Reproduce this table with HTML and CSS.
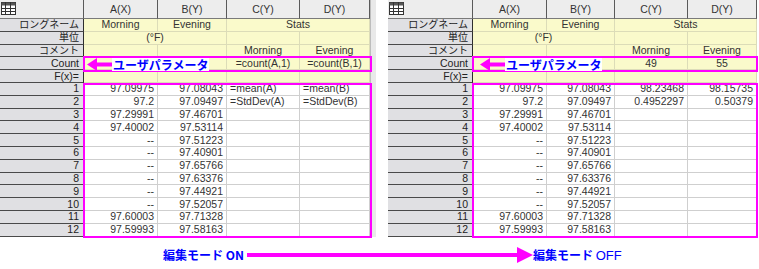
FILE: index.html
```html
<!DOCTYPE html>
<html lang="ja">
<head>
<meta charset="utf-8">
<link rel="stylesheet" href="styles.css">
</head>
<body>
<div class="page">
  <div class="panels">
    <div class="panel panel-left">
      <div class="sheet cols-left">
        <div class="c hd corner"><svg width="15" height="13" viewBox="0 0 15 13"><rect x="0.5" y="0.5" width="14" height="12" fill="#fff" stroke="#333"/><rect x="0.5" y="0.5" width="14" height="3" fill="#555"/><path d="M0 6.5H15M0 9.5H15M4.5 0V13M9.5 0V13" stroke="#333" stroke-width="1"/></svg></div>
        <div class="c hd">A(X)</div><div class="c hd">B(Y)</div><div class="c hd">C(Y)</div><div class="c hd">D(Y)</div>

        <div class="c lb jp">ロングネーム</div><div class="c y ctr">Morning</div><div class="c y ctr">Evening</div><div class="c y ctr span2">Stats</div>
        <div class="c lb jp">単位</div><div class="c y ctr span2">(°F)</div><div class="c y"></div><div class="c y"></div>
        <div class="c lb jp">コメント</div><div class="c y"></div><div class="c y"></div><div class="c y ctr">Morning</div><div class="c y ctr">Evening</div>
        <div class="c lb">Count</div><div class="c y"></div><div class="c y"></div><div class="c y ctr">=count(A,1)</div><div class="c y ctr">=count(B,1)</div>
        <div class="c lb">F(x)=</div><div class="c y"></div><div class="c y"></div><div class="c y"></div><div class="c y"></div>

        <div class="c lb">1</div><div class="c d">97.09975</div><div class="c d">97.08043</div><div class="c d lft">=mean(A)</div><div class="c d lft">=mean(B)</div>
        <div class="c lb">2</div><div class="c d">97.2</div><div class="c d">97.09497</div><div class="c d lft">=StdDev(A)</div><div class="c d lft">=StdDev(B)</div>
        <div class="c lb">3</div><div class="c d">97.29991</div><div class="c d">97.46701</div><div class="c d"></div><div class="c d"></div>
        <div class="c lb">4</div><div class="c d">97.40002</div><div class="c d">97.53114</div><div class="c d"></div><div class="c d"></div>
        <div class="c lb">5</div><div class="c d">--</div><div class="c d">97.51223</div><div class="c d"></div><div class="c d"></div>
        <div class="c lb">6</div><div class="c d">--</div><div class="c d">97.40901</div><div class="c d"></div><div class="c d"></div>
        <div class="c lb">7</div><div class="c d">--</div><div class="c d">97.65766</div><div class="c d"></div><div class="c d"></div>
        <div class="c lb">8</div><div class="c d">--</div><div class="c d">97.63376</div><div class="c d"></div><div class="c d"></div>
        <div class="c lb">9</div><div class="c d">--</div><div class="c d">97.44921</div><div class="c d"></div><div class="c d"></div>
        <div class="c lb">10</div><div class="c d">--</div><div class="c d">97.52057</div><div class="c d"></div><div class="c d"></div>
        <div class="c lb">11</div><div class="c d">97.60003</div><div class="c d">97.71328</div><div class="c d"></div><div class="c d"></div>
        <div class="c lb">12</div><div class="c d">97.59993</div><div class="c d">97.58163</div><div class="c d"></div><div class="c d"></div>
      </div>
      <div class="strip"></div>
      <div class="box box-count box-count-left"></div>
      <div class="box box-data box-data-left"></div>
      <div class="note note-left">
        <svg class="note-arrow" width="25" height="13" viewBox="0 0 25 13"><path d="M0 6.5L10 0V4.5H25V8.5H10V13Z" fill="#ff00ff"/></svg>
        <span class="note-text">ユーザパラメータ</span>
      </div>
    </div>

    <div class="panel panel-right">
      <div class="sheet cols-right">
        <div class="c hd corner"><svg width="15" height="13" viewBox="0 0 15 13"><rect x="0.5" y="0.5" width="14" height="12" fill="#fff" stroke="#333"/><rect x="0.5" y="0.5" width="14" height="3" fill="#555"/><path d="M0 6.5H15M0 9.5H15M4.5 0V13M9.5 0V13" stroke="#333" stroke-width="1"/></svg></div>
        <div class="c hd">A(X)</div><div class="c hd">B(Y)</div><div class="c hd">C(Y)</div><div class="c hd">D(Y)</div>

        <div class="c lb jp">ロングネーム</div><div class="c y ctr">Morning</div><div class="c y ctr">Evening</div><div class="c y ctr span2">Stats</div>
        <div class="c lb jp">単位</div><div class="c y ctr span2">(°F)</div><div class="c y"></div><div class="c y"></div>
        <div class="c lb jp">コメント</div><div class="c y"></div><div class="c y"></div><div class="c y ctr">Morning</div><div class="c y ctr">Evening</div>
        <div class="c lb">Count</div><div class="c y"></div><div class="c y"></div><div class="c y ctr">49</div><div class="c y ctr">55</div>
        <div class="c lb">F(x)=</div><div class="c y"></div><div class="c y"></div><div class="c y"></div><div class="c y"></div>

        <div class="c lb">1</div><div class="c d">97.09975</div><div class="c d">97.08043</div><div class="c d">98.23468</div><div class="c d">98.15735</div>
        <div class="c lb">2</div><div class="c d">97.2</div><div class="c d">97.09497</div><div class="c d">0.4952297</div><div class="c d">0.50379</div>
        <div class="c lb">3</div><div class="c d">97.29991</div><div class="c d">97.46701</div><div class="c d"></div><div class="c d"></div>
        <div class="c lb">4</div><div class="c d">97.40002</div><div class="c d">97.53114</div><div class="c d"></div><div class="c d"></div>
        <div class="c lb">5</div><div class="c d">--</div><div class="c d">97.51223</div><div class="c d"></div><div class="c d"></div>
        <div class="c lb">6</div><div class="c d">--</div><div class="c d">97.40901</div><div class="c d"></div><div class="c d"></div>
        <div class="c lb">7</div><div class="c d">--</div><div class="c d">97.65766</div><div class="c d"></div><div class="c d"></div>
        <div class="c lb">8</div><div class="c d">--</div><div class="c d">97.63376</div><div class="c d"></div><div class="c d"></div>
        <div class="c lb">9</div><div class="c d">--</div><div class="c d">97.44921</div><div class="c d"></div><div class="c d"></div>
        <div class="c lb">10</div><div class="c d">--</div><div class="c d">97.52057</div><div class="c d"></div><div class="c d"></div>
        <div class="c lb">11</div><div class="c d">97.60003</div><div class="c d">97.71328</div><div class="c d"></div><div class="c d"></div>
        <div class="c lb">12</div><div class="c d">97.59993</div><div class="c d">97.58163</div><div class="c d"></div><div class="c d"></div>
      </div>
      <div class="box box-count box-count-right"></div>
      <div class="box box-data box-data-right"></div>
      <div class="note note-right">
        <svg class="note-arrow" width="25" height="13" viewBox="0 0 25 13"><path d="M0 6.5L10 0V4.5H25V8.5H10V13Z" fill="#ff00ff"/></svg>
        <span class="note-text">ユーザパラメータ</span>
      </div>
    </div>
  </div>

  <div class="caption">
    <span class="mode mode-on">編集モード ON</span>
    <svg class="big-arrow" width="286" height="16" viewBox="0 0 286 16"><rect x="0" y="6" width="272" height="4" fill="#ff00ff"/><path d="M270 0L286 8L270 16Z" fill="#ff00ff"/></svg>
    <span class="mode mode-off">編集モード <span class="off">OFF</span></span>
  </div>
</div>
</body>
</html>
```

FILE: styles.css
```css
* { box-sizing: border-box; }
html, body { margin: 0; padding: 0; background: #fff; }
body {
  font-family: "Liberation Sans", Arial, "Noto Sans CJK JP", sans-serif;
  font-size: 10.5px;
  color: #333;
  width: 759px;
  height: 269px;
  overflow: hidden;
}
.page { display: flex; flex-direction: column; }
.panels { display: flex; gap: 11px; height: 237px; }
.panel { position: relative; display: flex; }
.panel-right { margin-left: 1px; }

.sheet {
  display: grid;
  grid-template-rows: 19px repeat(17, 12.8px);
}
.cols-left { grid-template-columns: 84px 74px 69px 73px 70px; }
.cols-right { grid-template-columns: 85px 74px 68px 73px 69px; }
.strip { width: 6px; background: #e9e9e9; border-left: 1px solid #bdbdbd; }

.c {
  display: flex;
  align-items: center;
  justify-content: flex-end;
  padding: 0 3px;
  white-space: nowrap;
  overflow: hidden;
  line-height: 11px;
  border-right: 1px solid #cfcfcf;
  border-bottom: 1px solid #cfcfcf;
}
.hd {
  background: #ededed;
  justify-content: center;
  border-right: 1px solid #5a5a5a;
  border-bottom: 1px solid #7a7a7a;
  color: #333;
  padding-top: 1px;
}
.corner { justify-content: flex-start; padding-left: 1px; align-items: flex-start; padding-top: 2px; }
.lb {
  background: #e0e0e3;
  border-right: 1px solid #2e2e2e;
  border-bottom: 1px solid #4a4a4a;
  padding-right: 4px;
  color: #222;
  font-family: "Liberation Sans", "Noto Sans CJK JP", sans-serif;
}
.jp { font-size: 10px; }
.y { background: #fafacb; border-color: #dcdcb8; }
.d { background: #fff; }
.ctr { justify-content: center; }
.lft { justify-content: flex-start; }
.span2 { grid-column: span 2; }

.box { position: absolute; border: 2px solid #ff00ff; pointer-events: none; }
.box-count { top: 56px; height: 16px; }
.box-data { top: 83px; height: 155px; }
.box-count-left, .box-data-left { left: 83px; width: 289px; }
.box-count-right, .box-data-right { left: 84px; width: 286px; }

.note {
  position: absolute;
  top: 57px;
  height: 14px;
  display: flex;
  align-items: center;
}
.note-left { left: 87px; }
.note-right { left: 92px; }
.note-arrow { display: block; }
.note-text {
  background: #fff;
  color: #0000ff;
  font-family: "Noto Sans CJK JP", sans-serif;
  font-weight: 700;
  font-size: 12px;
  line-height: 13px;
  padding: 0 1px;
}

.caption {
  display: flex;
  align-items: center;
  height: 16px;
  margin-top: 10px;
  padding-left: 163px;
}
.mode {
  color: #0000ff;
  font-family: "Noto Sans CJK JP", sans-serif;
  font-weight: 700;
  font-size: 12px;
  line-height: 14px;
  white-space: nowrap;
}
.mode-on { margin-right: 3px; }
.big-arrow { display: block; }
.off { font-family: "Liberation Sans", sans-serif; font-weight: 400; font-size: 13px; }
```
